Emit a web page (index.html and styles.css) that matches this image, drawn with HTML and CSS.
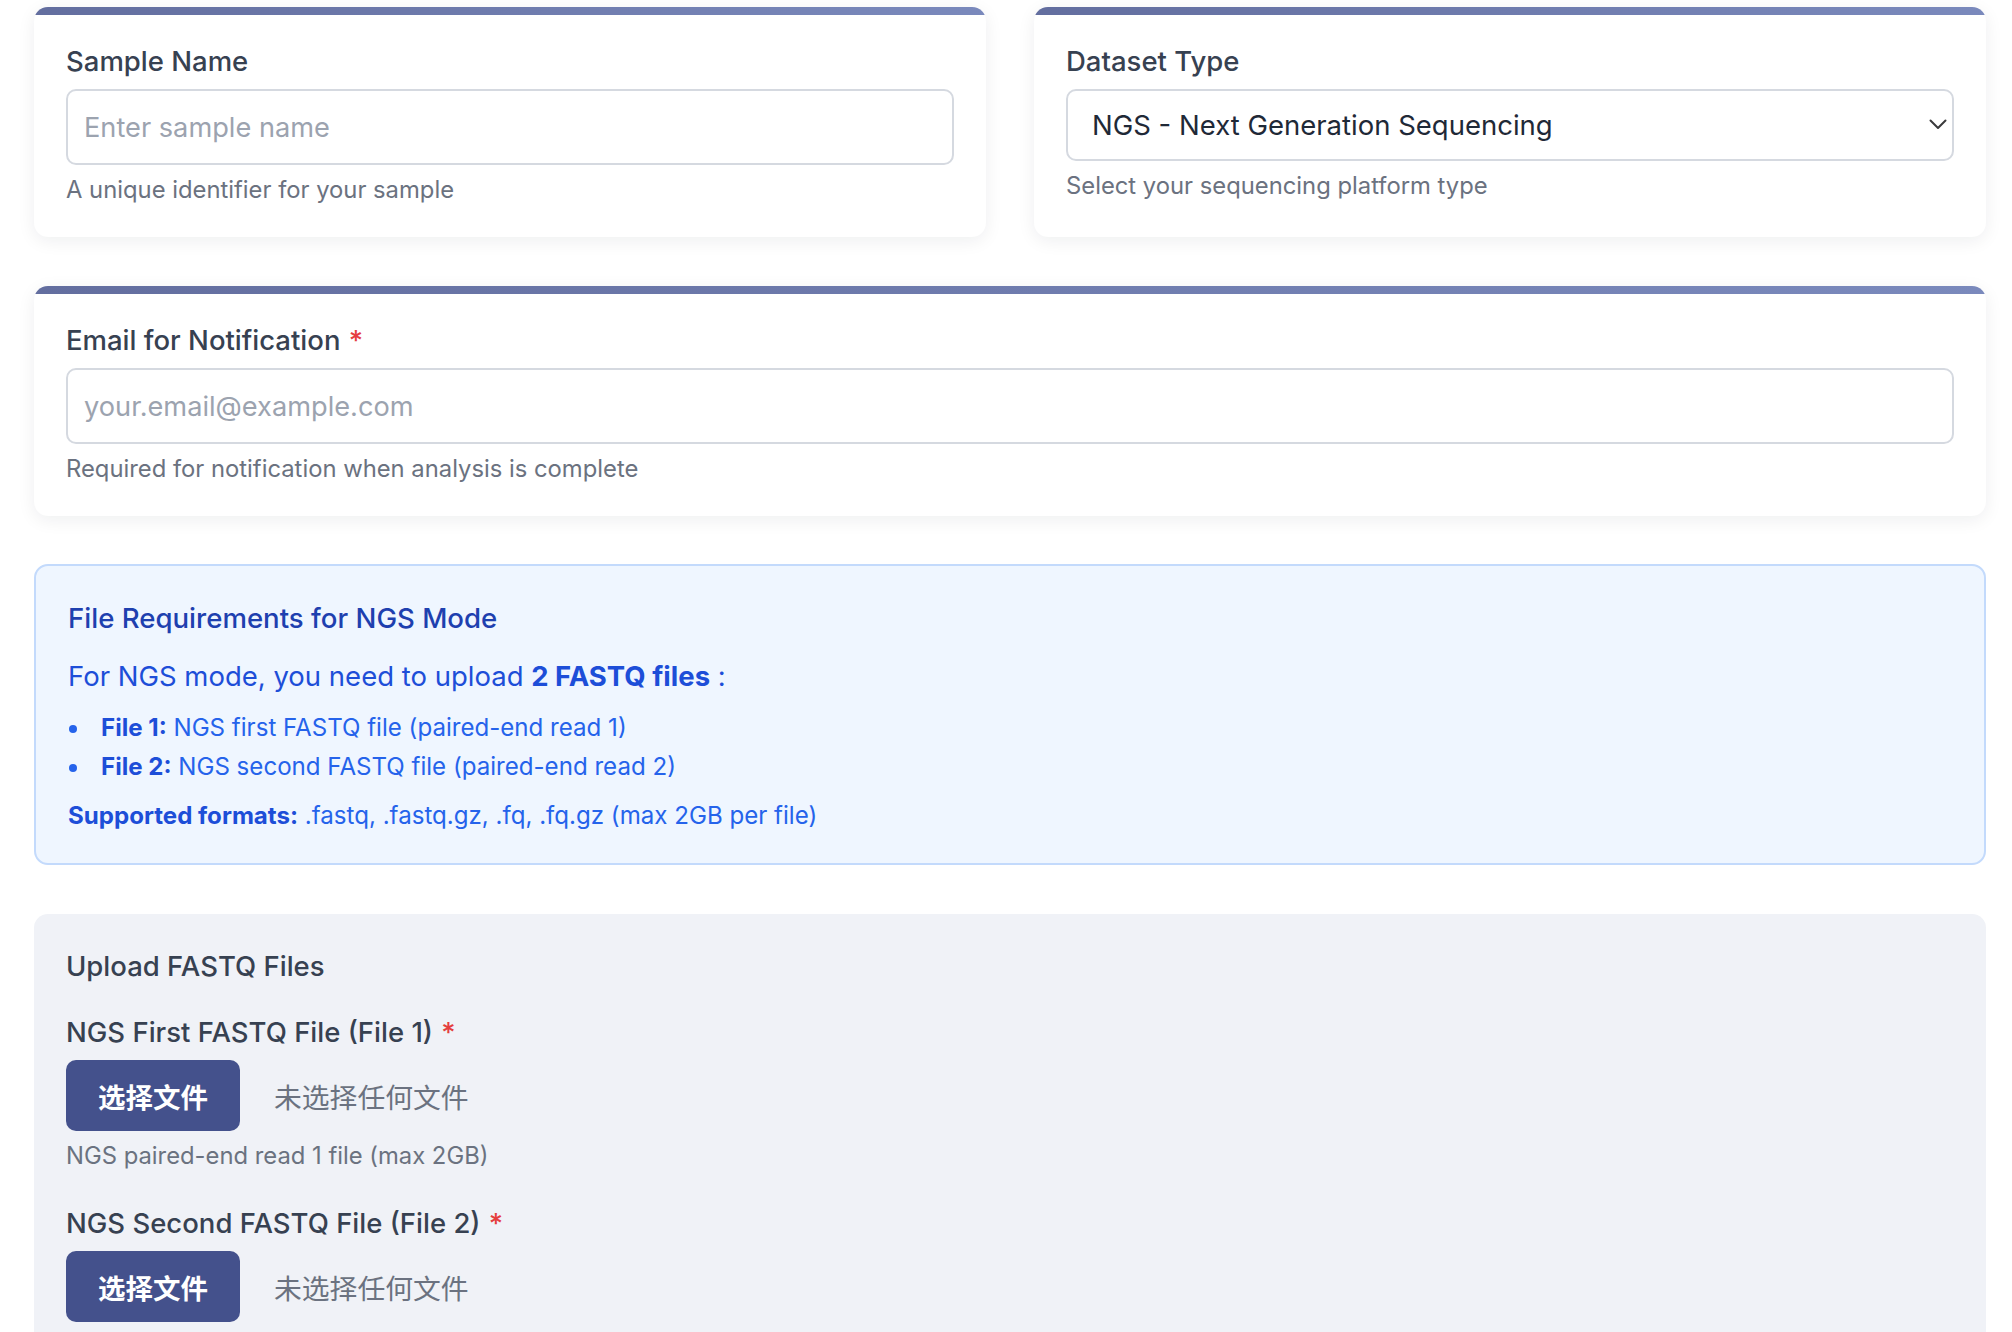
FILE: index.html
```html
<!DOCTYPE html>
<html lang="en">
<head>
<meta charset="utf-8">
<title>NGS Upload</title>
<link rel="stylesheet" href="styles.css">
</head>
<body>
<main class="page">
  <div class="row-2">
    <section class="card">
      <label class="label" for="sample">Sample Name</label>
      <input class="text-input" id="sample" type="text" placeholder="Enter sample name">
      <p class="help">A unique identifier for your sample</p>
    </section>
    <section class="card">
      <label class="label" for="dtype">Dataset Type</label>
      <div class="select-wrap">
        <select id="dtype" class="select">
          <option>NGS - Next Generation Sequencing</option>
        </select>
        <svg class="chevron" viewBox="0 0 18 11" aria-hidden="true"><path d="M1.5 1.5 9 9l7.5-7.5"/></svg>
      </div>
      <p class="help">Select your sequencing platform type</p>
    </section>
  </div>

  <section class="card card-wide">
    <label class="label" for="email">Email for Notification <span class="req">*</span></label>
    <input class="text-input" id="email" type="email" placeholder="your.email@example.com">
    <p class="help">Required for notification when analysis is complete</p>
  </section>

  <section class="info">
    <h3 class="info-title">File Requirements for NGS Mode</h3>
    <p class="info-lead">For NGS mode, you need to upload <strong>2 FASTQ files</strong> :</p>
    <ul class="info-list">
      <li><strong>File 1:</strong> NGS first FASTQ file (paired-end read 1)</li>
      <li><strong>File 2:</strong> NGS second FASTQ file (paired-end read 2)</li>
    </ul>
    <p class="info-formats"><strong>Supported formats:</strong> .fastq, .fastq.gz, .fq, .fq.gz (max 2GB per file)</p>
  </section>

  <section class="upload">
    <h3 class="upload-title">Upload FASTQ Files</h3>
    <div class="field">
      <div class="label">NGS First FASTQ File (File 1) <span class="req">*</span></div>
      <div class="file-row">
        <span class="file-btn">选择文件</span>
        <span class="file-none">未选择任何文件</span>
      </div>
      <p class="help">NGS paired-end read 1 file (max 2GB)</p>
    </div>
    <div class="field">
      <div class="label">NGS Second FASTQ File (File 2) <span class="req">*</span></div>
      <div class="file-row">
        <span class="file-btn">选择文件</span>
        <span class="file-none">未选择任何文件</span>
      </div>
    </div>
  </section>
</main>
</body>
</html>
```

FILE: styles.css
```css
* { box-sizing: border-box; }

html { overflow: hidden; }

html, body {
  margin: 0;
  padding: 0;
  background: #ffffff;
}

body {
  font-family: Inter, "Noto Sans", "Noto Sans CJK SC", sans-serif;
  color: #374151;
}

.page {
  padding: 7px 26px 0 34px;
}

.row-2 {
  display: grid;
  grid-template-columns: 1fr 1fr;
  gap: 48px;
}

.card {
  background: linear-gradient(90deg, #636e9f, #7a89bc) top / 100% 8px no-repeat, #ffffff;
  border-radius: 14px;
  box-shadow: 0 4px 18px rgba(15, 23, 42, 0.07);
  padding: 34px 32px 29px;
  display: flex;
  flex-direction: column;
}

.card-wide { margin-top: 49px; }

.label {
  display: block;
  font-size: 27.5px;
  line-height: 40px;
  font-weight: 500;
  color: #374151;
  margin-bottom: 8px;
}

.req {
  color: #e53e3e;
  margin-left: 1px;
}

.text-input {
  display: block;
  width: 100%;
  height: 76px;
  border: 2px solid #d5d9e0;
  border-radius: 10px;
  padding: 0 16px;
  font-family: inherit;
  font-size: 27.2px;
  color: #1f2937;
  background: #ffffff;
  outline: none;
}

.text-input::placeholder { color: #9ca3af; }

.select-wrap { position: relative; }

.select {
  appearance: none;
  -webkit-appearance: none;
  display: block;
  width: 100%;
  height: 72px;
  border: 2px solid #d5d9e0;
  border-radius: 10px;
  padding: 0 48px 0 24px;
  font-family: inherit;
  font-size: 27.5px;
  color: #1f2937;
  background: #ffffff;
}

.chevron {
  position: absolute;
  right: 7px;
  top: 30px;
  width: 18px;
  height: 11px;
  fill: none;
  stroke: #3a3a3c;
  stroke-width: 2;
  stroke-linecap: round;
  stroke-linejoin: round;
  pointer-events: none;
}

.help {
  margin: 7px 0 0;
  font-size: 23.8px;
  line-height: 36px;
  color: #6b7280;
}

.info {
  margin-top: 48px;
  background: #eff6ff;
  border: 2px solid #c3dafc;
  border-radius: 14px;
  padding: 32px 32px 29px;
  color: #2563eb;
}

.info-title {
  margin: 0;
  font-size: 27.6px;
  line-height: 40px;
  font-weight: 500;
  color: #1e40af;
}

.info-lead {
  margin: 16px 0 0;
  font-size: 27.5px;
  line-height: 44px;
  color: #1d4ed8;
}

.info strong {
  font-weight: 700;
  color: #1d4ed8;
}

.info-list {
  list-style: none;
  margin: 10px 0 0;
  padding: 0;
}

.info-list li {
  font-size: 24.1px;
  line-height: 39px;
}

.info-list li::before {
  content: "";
  display: inline-block;
  width: 8px;
  height: 8px;
  border-radius: 50%;
  background: #2563eb;
  vertical-align: middle;
  margin: 0 24px 0 1px;
}

.info-formats {
  margin: 12px 0 0;
  font-size: 24.1px;
  line-height: 36px;
}

.upload {
  margin-top: 49px;
  background: #f0f2f7;
  border-radius: 14px;
  padding: 32px 32px 40px;
}

.upload-title {
  margin: 0;
  font-size: 27.5px;
  line-height: 40px;
  font-weight: 500;
  color: #374151;
}

.field { margin-top: 26px; }
.field + .field { margin-top: 29px; }

.file-row {
  display: flex;
  align-items: center;
  gap: 34px;
}

.file-btn {
  display: flex;
  align-items: center;
  justify-content: center;
  width: 174px;
  height: 71px;
  border-radius: 10px;
  background: #44518c;
  color: #ffffff;
  font-family: "Noto Sans CJK SC", sans-serif;
  font-weight: 700;
  font-size: 27.5px;
}

.file-none {
  font-family: "Noto Sans CJK SC", sans-serif;
  font-size: 27.8px;
  color: #6b7280;
}
```
